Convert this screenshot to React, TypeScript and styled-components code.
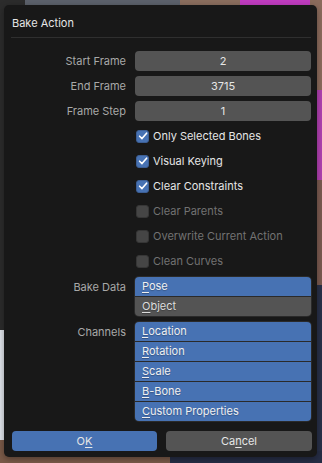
import React from "react";
import styled, { createGlobalStyle } from "styled-components";

const Global = createGlobalStyle`
  html, body { margin: 0; padding: 0; background: #2c2c2c; }
  body {
    font-family: Inter, "DejaVu Sans", sans-serif;
  }
`;

const Page = styled.div`
  box-sizing: border-box;
  width: 322px;
  height: 463px;
  overflow: hidden;
  padding: 5px 5px 6px 4px;
  background-color: #2c2c2c;
  background-image:
    linear-gradient(to right, #7a5a48 0 170px, #262d45 170px),
    linear-gradient(to bottom, #8b6b5c 0 90px, #b040b0 90px 180px, #7a5a50 180px 285px, #283048 285px),
    linear-gradient(to bottom, #2c2c2c 0 330px, #dfe3ea 330px 440px, #7a5a48 440px),
    linear-gradient(to right, #2c2c2c 0 25px, #5c616b 25px 180px, #8a6e5e 180px 240px, #c03cc0 240px 310px, #8b6b5c 310px);
  background-repeat: no-repeat;
  background-size: 100% 12px, 10px 100%, 8px 100%, 100% 10px;
  background-position: left bottom, right top, left top, left top;
`;

const Dialog = styled.div`
  box-sizing: border-box;
  width: 313px;
  height: 452px;
  background: #181818;
  border-radius: 5px;
  box-shadow: 0 2px 6px rgba(0, 0, 0, 0.35);
  display: flex;
  flex-direction: column;
  padding: 0 6px 0 7px;
`;

const Title = styled.div`
  box-sizing: border-box;
  height: 32px;
  padding-top: 4px;
  display: flex;
  align-items: center;
  padding-left: 1px;
  font-size: 11px;
  color: #e6e6e6;
`;

const Separator = styled.div`
  height: 1px;
  background: #2f2f2f;
  margin-bottom: 13px;
`;

const Form = styled.div`
  display: flex;
  flex-direction: column;
  gap: 5px;
`;

const Row = styled.div<{ $top?: number }>`
  display: grid;
  grid-template-columns: 115px 176px;
  column-gap: 9px;
  align-items: start;
  margin-top: ${(p) => p.$top ?? 0}px;
`;

const Label = styled.div`
  height: 20px;
  line-height: 20px;
  text-align: right;
  font-size: 11px;
  color: #a8a8a8;
  white-space: nowrap;
`;

const NumField = styled.div`
  height: 20px;
  line-height: 20px;
  background: #545454;
  border-radius: 4px;
  text-align: center;
  font-size: 11px;
  color: #e6e6e6;
`;

const CheckRow = styled.div<{ $disabled?: boolean }>`
  grid-column: 2;
  height: 20px;
  display: flex;
  align-items: center;
  gap: 4px;
  padding-left: 1px;
  font-size: 11px;
  color: ${(p) => (p.$disabled ? "#727272" : "#e6e6e6")};
`;

const Box = styled.div<{ $checked?: boolean; $disabled?: boolean }>`
  box-sizing: border-box;
  width: 13px;
  height: 13px;
  border-radius: 3px;
  background: ${(p) => (p.$checked ? "#4772b3" : p.$disabled ? "#454545" : "#545454")};
  border: 1px solid ${(p) => (p.$checked ? "#3c5e94" : "#363636")};
  display: flex;
  align-items: center;
  justify-content: center;
`;

const Group = styled.div`
  border-radius: 4px;
  overflow: hidden;
  box-shadow: 0 0 0 1px #2a2a2a;
  display: flex;
  flex-direction: column;
  gap: 1px;
  background: #2a2a2a;
`;

const Item = styled.div<{ $on?: boolean }>`
  height: 19px;
  line-height: 19px;
  padding-left: 7px;
  font-size: 11px;
  color: ${(p) => (p.$on ? "#f0f0f0" : "#dcdcdc")};
  background: ${(p) => (p.$on ? "#4772b3" : "#545454")};
  text-shadow: 0 1px 1px rgba(0, 0, 0, 0.25);
`;

const Key = styled.span`
  text-decoration: underline;
  text-decoration-thickness: 1px;
  text-underline-offset: 2px;
`;

const Buttons = styled.div`
  margin-top: 10px;
  display: grid;
  grid-template-columns: 145px 146px;
  column-gap: 9px;
  padding-left: 1px;
`;

const Button = styled.div<{ $primary?: boolean }>`
  height: 20px;
  line-height: 20px;
  border-radius: 4px;
  text-align: center;
  font-size: 11px;
  color: #e6e6e6;
  background: ${(p) => (p.$primary ? "#4772b3" : "#545454")};
`;

const Check = () => (
  <svg width="10" height="10" viewBox="0 0 10 10">
    <path d="M1.6 5.2 L4 7.6 L8.6 2.2" fill="none" stroke="#ffffff" strokeWidth="1.6" strokeLinecap="round" strokeLinejoin="round" />
  </svg>
);

const checks: { label: string; on: boolean }[] = [
  { label: "Only Selected Bones", on: true },
  { label: "Visual Keying", on: true },
  { label: "Clear Constraints", on: true },
  { label: "Clear Parents", on: false },
  { label: "Overwrite Current Action", on: false },
  { label: "Clean Curves", on: false },
];

const Mn = ({ text, k = 0 }: { text: string; k?: number }) => (
  <>
    {text.slice(0, k)}
    <Key>{text[k]}</Key>
    {text.slice(k + 1)}
  </>
);

export default function App() {
  return (
    <>
      <Global />
      <Page>
        <Dialog>
          <Title>Bake Action</Title>
          <Separator />
          <Form>
            <Row>
              <Label>Start Frame</Label>
              <NumField>2</NumField>
            </Row>
            <Row>
              <Label>End Frame</Label>
              <NumField>3715</NumField>
            </Row>
            <Row>
              <Label>Frame Step</Label>
              <NumField>1</NumField>
            </Row>
            {checks.map((c) => (
              <Row key={c.label}>
                <CheckRow $disabled={!c.on}>
                  <Box $checked={c.on} $disabled={!c.on}>
                    {c.on && <Check />}
                  </Box>
                  {c.label}
                </CheckRow>
              </Row>
            ))}
            <Row $top={1}>
              <Label>Bake Data</Label>
              <Group>
                <Item $on><Mn text="Pose" /></Item>
                <Item><Mn text="Object" /></Item>
              </Group>
            </Row>
            <Row $top={1}>
              <Label>Channels</Label>
              <Group>
                <Item $on><Mn text="Location" /></Item>
                <Item $on><Mn text="Rotation" /></Item>
                <Item $on><Mn text="Scale" /></Item>
                <Item $on><Mn text="B-Bone" /></Item>
                <Item $on><Mn text="Custom Properties" /></Item>
              </Group>
            </Row>
          </Form>
          <Buttons>
            <Button $primary><Mn text="OK" k={1} /></Button>
            <Button><Mn text="Cancel" k={2} /></Button>
          </Buttons>
        </Dialog>
      </Page>
    </>
  );
}
